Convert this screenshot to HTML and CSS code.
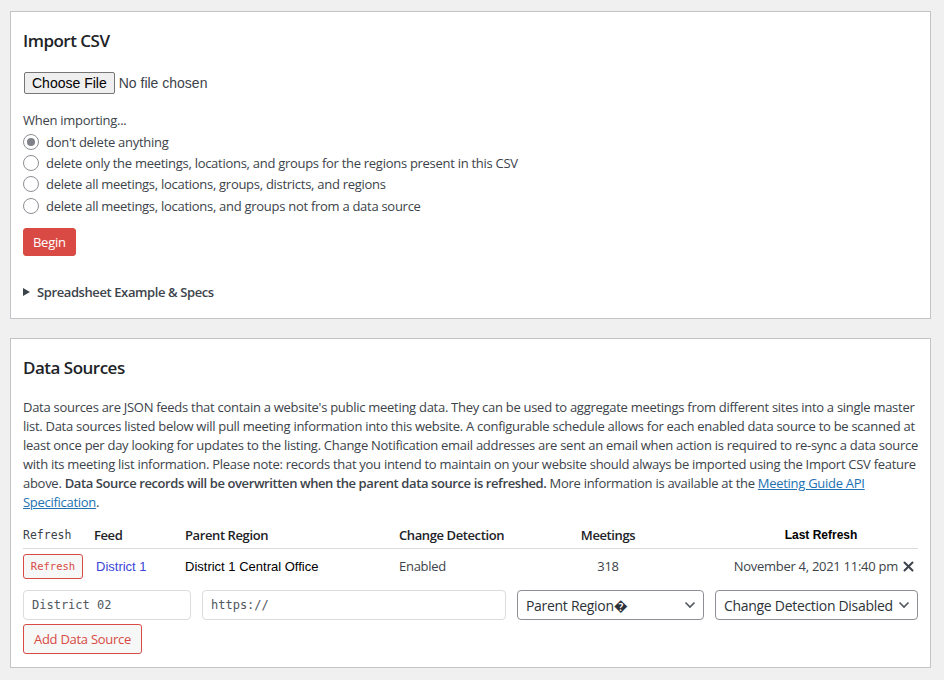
FILE: index.html
```html
<!DOCTYPE html>
<html lang="en">
<head>
<meta charset="utf-8">
<title>Import &amp; Data Sources</title>
<link rel="stylesheet" href="styles.css">
</head>
<body>
<div class="wrap">
  <section class="card card-import">
    <h2 class="card-title">Import CSV</h2>
    <div class="file-row">
      <button type="button" class="file-btn">Choose File</button>
      <span class="file-name">No file chosen</span>
    </div>
    <p class="when">When importing...</p>
    <ul class="radios">
      <li><label><span class="radio checked"></span>don't delete anything</label></li>
      <li><label><span class="radio"></span>delete only the meetings, locations, and groups for the regions present in this CSV</label></li>
      <li><label><span class="radio"></span>delete all meetings, locations, groups, districts, and regions</label></li>
      <li><label><span class="radio"></span>delete all meetings, locations, and groups not from a data source</label></li>
    </ul>
    <button type="button" class="btn-begin">Begin</button>
    <div class="details"><span class="tri"></span>Spreadsheet Example &amp; Specs</div>
  </section>

  <section class="card card-sources">
    <h2 class="card-title">Data Sources</h2>
    <p class="desc">Data sources are JSON feeds that contain a website's public meeting data. They can be used to aggregate meetings from different sites into a single master list. Data sources listed below will pull meeting information into this website. A configurable schedule allows for each enabled data source to be scanned at least once per day looking for updates to the listing. Change Notification email addresses are sent an email when action is required to re-sync a data source with its meeting list information. Please note: records that you intend to maintain on your website should always be imported using the Import CSV feature above. <strong>Data Source records will be overwritten when the parent data source is refreshed.</strong> More information is available at the <a href="#">Meeting Guide API Specification</a>.</p>

    <table class="sources">
      <thead>
        <tr>
          <th class="c-refresh mono">Refresh</th>
          <th class="c-feed">Feed</th>
          <th class="c-parent">Parent Region</th>
          <th class="c-change">Change Detection</th>
          <th class="c-meet">Meetings</th>
          <th class="c-last">Last Refresh</th>
        </tr>
      </thead>
      <tbody>
        <tr>
          <td class="c-refresh"><button type="button" class="btn-refresh">Refresh</button></td>
          <td class="c-feed"><a href="#" class="feed-link">District 1</a></td>
          <td class="c-parent arial">District 1 Central Office</td>
          <td class="c-change">Enabled</td>
          <td class="c-meet">318</td>
          <td class="c-last">November 4, 2021 11:40 pm <svg class="x" width="11" height="11" viewBox="0 0 11 11"><path d="M1.5 1.5 L9.5 9.5 M9.5 1.5 L1.5 9.5" stroke="#3c434a" stroke-width="2" stroke-linecap="round"/></svg></td>
        </tr>
      </tbody>
    </table>

    <div class="add-row">
      <input class="inp inp-name" type="text" value="District 02">
      <input class="inp inp-url" type="text" value="https://">
      <div class="sel sel-parent">
        <select><option>Parent Region&#xFFFD;</option></select>
        <svg class="chev" width="12" height="8" viewBox="0 0 12 8"><path d="M1.5 1.5 L6 6 L10.5 1.5" fill="none" stroke="#50575e" stroke-width="1.6"/></svg>
      </div>
      <div class="sel sel-change">
        <select><option>Change Detection Disabled</option></select>
        <svg class="chev" width="12" height="8" viewBox="0 0 12 8"><path d="M1.5 1.5 L6 6 L10.5 1.5" fill="none" stroke="#50575e" stroke-width="1.6"/></svg>
      </div>
    </div>
    <button type="button" class="btn-add">Add Data Source</button>
  </section>
</div>
</body>
</html>
```

FILE: styles.css
```css
* { box-sizing: border-box; }
html, body { margin: 0; padding: 0; }
body {
  background: #f0f0f1;
  font-family: "Open Sans", "Noto Sans", sans-serif;
  font-size: 13px;
  letter-spacing: -0.28px;
  color: #3c434a;
}
.wrap {
  padding: 11px 13px 0 10px;
  display: flex;
  flex-direction: column;
  gap: 19px;
}
.card {
  background: #fff;
  border: 1px solid #c3c4c7;
  padding: 17px 12px 0 12px;
}
.card-import { height: 308px; }
.card-sources { height: 330px; }
.card-title {
  margin: 0;
  font-size: 17px;
  font-weight: 600;
  line-height: 24px;
  letter-spacing: -0.5px;
  color: #1d2327;
}
.file-row {
  margin-top: 19px;
  display: flex;
  align-items: center;
  gap: 4px;
}
.file-btn {
  font-family: "Liberation Sans", Arial, sans-serif;
  font-size: 14px;
  letter-spacing: 0;
  color: #000;
  background: #efefef;
  border: 1px solid #767676;
  border-radius: 2px;
  height: 22px;
  padding: 0 7px;
  margin: 0 0 0 1px;
}
.file-name {
  font-family: "Liberation Sans", Arial, sans-serif;
  font-size: 14px;
  letter-spacing: 0;
  color: #3c434a;
}
.when {
  margin: 16px 0 0 0;
  line-height: 21px;
}
.radios {
  list-style: none;
  margin: 0;
  padding: 0;
}
.radios li {
  height: 21.4px;
  display: flex;
  align-items: center;
}
.radios label {
  display: flex;
  align-items: center;
  gap: 7px;
}
.radio {
  width: 16px;
  height: 16px;
  border: 1px solid #8c8f94;
  border-radius: 50%;
  display: inline-flex;
  align-items: center;
  justify-content: center;
  flex: none;
}
.radio.checked::after {
  content: "";
  width: 8px;
  height: 8px;
  border-radius: 50%;
  background: #7e8188;
}
.btn-begin {
  margin-top: 11px;
  height: 28px;
  padding: 0 9px;
  font-family: inherit;
  font-size: 13px;
  letter-spacing: -0.28px;
  color: #fff;
  background: #d94a44;
  border: 1px solid #d94a44;
  border-radius: 3px;
}
.details {
  margin-top: 27px;
  font-weight: 600;
  letter-spacing: -0.4px;
  color: #3c434a;
  display: flex;
  align-items: center;
  gap: 7px;
  line-height: 18px;
}
.tri {
  width: 0;
  height: 0;
  border-left: 7px solid #3c434a;
  border-top: 4.5px solid transparent;
  border-bottom: 4.5px solid transparent;
}
.desc {
  margin: 18px 0 0 0;
  line-height: 19px;
}
.desc strong { font-weight: 600; color: #3c434a; letter-spacing: -0.4px; }
.desc a { color: #2271b1; text-decoration: underline; }

.sources {
  margin-top: 13px;
  width: 100%;
  border-collapse: collapse;
  table-layout: fixed;
}
.sources th {
  font-weight: 600;
  letter-spacing: -0.4px;
  color: #1d2327;
  text-align: left;
  padding: 0 0 2px 0;
  height: 23px;
  vertical-align: middle;
  border-bottom: 1px solid #dcdcde;
  white-space: nowrap;
}
.sources td {
  padding: 0;
  height: 36px;
  vertical-align: middle;
  white-space: nowrap;
}
.c-refresh { width: 71px; }
.c-feed { width: 91px; }
.c-parent { width: 214px; }
.c-change { width: 146px; }
.c-meet { width: 126px; text-align: center !important; }
.c-last { text-align: right; }
th.c-last {
  text-align: center;
  padding-left: 53px !important;
  font-family: "Liberation Sans", Arial, sans-serif;
  font-size: 12px;
  font-weight: 700;
  letter-spacing: 0;
  color: #000;
}
th.mono {
  font-family: "DejaVu Sans Mono", "Liberation Mono", monospace;
  font-weight: 400;
  font-size: 11.5px;
  letter-spacing: 0;
  color: #3c434a;
}
.btn-refresh {
  font-family: "DejaVu Sans Mono", "Liberation Mono", monospace;
  font-size: 10.5px;
  letter-spacing: 0;
  color: #d94a44;
  background: #f6f7f7;
  border: 1px solid #d94a44;
  border-radius: 3px;
  height: 25px;
  width: 60px;
  padding: 0;
  margin-top: 0;
}
.feed-link {
  font-family: "Liberation Sans", Arial, sans-serif;
  font-size: 13px;
  letter-spacing: 0;
  color: #3b45d8;
  text-decoration: none;
  margin-left: 2px;
}
.arial {
  font-family: "Liberation Sans", Arial, sans-serif;
  letter-spacing: 0;
  color: #000;
}
.c-last .x {
  vertical-align: -1px;
  margin-left: 2px;
  margin-right: 4px;
}
.add-row {
  margin-top: 6px;
  display: flex;
  gap: 11px;
  align-items: center;
}
.inp {
  height: 30px;
  border: 1px solid #dcdcde;
  border-radius: 4px;
  font-family: "DejaVu Sans Mono", "Liberation Mono", monospace;
  font-size: 12px;
  letter-spacing: 0;
  color: #50575e;
  padding: 0 8px;
  background: #fff;
}
.inp-name { width: 168px; }
.inp-url { width: 306px; }
.sel { position: relative; }
.sel select {
  appearance: none;
  -webkit-appearance: none;
  height: 30px;
  border: 1px solid #8c8f94;
  border-radius: 4px;
  background: #fff;
  font-family: inherit;
  font-size: 14px;
  letter-spacing: -0.3px;
  color: #2c3338;
  padding: 0 24px 0 8px;
}
.sel-parent select { width: 187px; }
.sel-change select { width: 203px; }
.chev {
  position: absolute;
  right: 8px;
  top: 11px;
  pointer-events: none;
}
.btn-add {
  margin-top: 4px;
  height: 30px;
  padding: 0 10px;
  font-family: inherit;
  font-size: 13px;
  letter-spacing: -0.28px;
  color: #d94a44;
  background: #f6f7f7;
  border: 1px solid #d94a44;
  border-radius: 3px;
}
```
